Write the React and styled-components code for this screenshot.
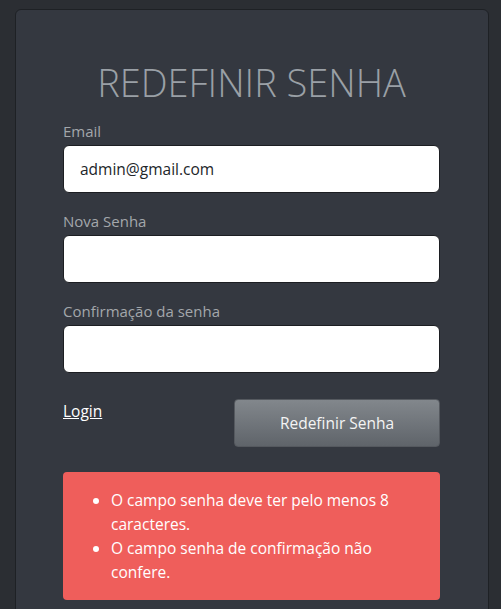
import React from 'react';
import styled, { createGlobalStyle } from 'styled-components';

const GlobalStyle = createGlobalStyle`
  body {
    margin: 0;
    background: #2b2e33;
    font-family: "Open Sans", "Noto Sans", sans-serif;
  }
`;

const Card = styled.div`
  box-sizing: border-box;
  width: 474px;
  min-height: 620px;
  margin: 9px 0 0 15px;
  padding: 48px 48px 20px 47px;
  background: #343840;
  border: 1px solid #1e2125;
  border-radius: 6px;
`;

const Title = styled.h1`
  margin: 0 0 13px;
  text-align: center;
  font-size: 38px;
  font-weight: 300;
  line-height: 48px;
  color: #9aa0a6;
`;

const Field = styled.div`
  display: flex;
  flex-direction: column;
  gap: 2px;
  margin-bottom: 16px;
`;

const Label = styled.label`
  font-size: 15px;
  line-height: 24px;
  color: #a3a7ab;
`;

const Input = styled.input`
  box-sizing: border-box;
  height: 48px;
  width: 100%;
  padding: 0 16px;
  border: 1px solid #1c1e22;
  border-radius: 6px;
  background: #fff;
  color: #212529;
  font-family: inherit;
  font-size: 15.5px;
  outline: none;
`;

const Actions = styled.div`
  display: flex;
  justify-content: space-between;
  align-items: flex-start;
  margin-top: 26px;
`;

const LoginLink = styled.a`
  color: #fff;
  font-size: 15.5px;
  line-height: 24px;
  text-decoration: underline;
`;

const SubmitButton = styled.button`
  width: 206px;
  height: 48px;
  border: 1px solid #55595f;
  border-radius: 4px;
  background: linear-gradient(#82878c, #5f646a);
  color: #f4f4f4;
  font-family: inherit;
  font-size: 15.5px;
`;

const Alert = styled.div`
  margin-top: 25px;
  padding: 16px;
  border-radius: 4px;
  background: #ef5e5b;
  color: #fff;
`;

const Errors = styled.ul`
  margin: 0;
  padding-left: 32px;
  font-size: 15.5px;
  line-height: 24px;
`;

const fields = [
  { label: 'Email', type: 'email', value: 'admin@gmail.com' },
  { label: 'Nova Senha', type: 'password', value: '' },
  { label: 'Confirmação da senha', type: 'password', value: '' },
];

const errors = [
  'O campo senha deve ter pelo menos 8 caracteres.',
  'O campo senha de confirmação não confere.',
];

export default function App() {
  return (
    <>
      <GlobalStyle />
      <Card>
        <Title>REDEFINIR SENHA</Title>
        {fields.map((f) => (
          <Field key={f.label}>
            <Label>{f.label}</Label>
            <Input type={f.type} defaultValue={f.value} />
          </Field>
        ))}
        <Actions>
          <LoginLink href="#">Login</LoginLink>
          <SubmitButton>Redefinir Senha</SubmitButton>
        </Actions>
        <Alert>
          <Errors>
            {errors.map((e) => (
              <li key={e}>{e}</li>
            ))}
          </Errors>
        </Alert>
      </Card>
    </>
  );
}
